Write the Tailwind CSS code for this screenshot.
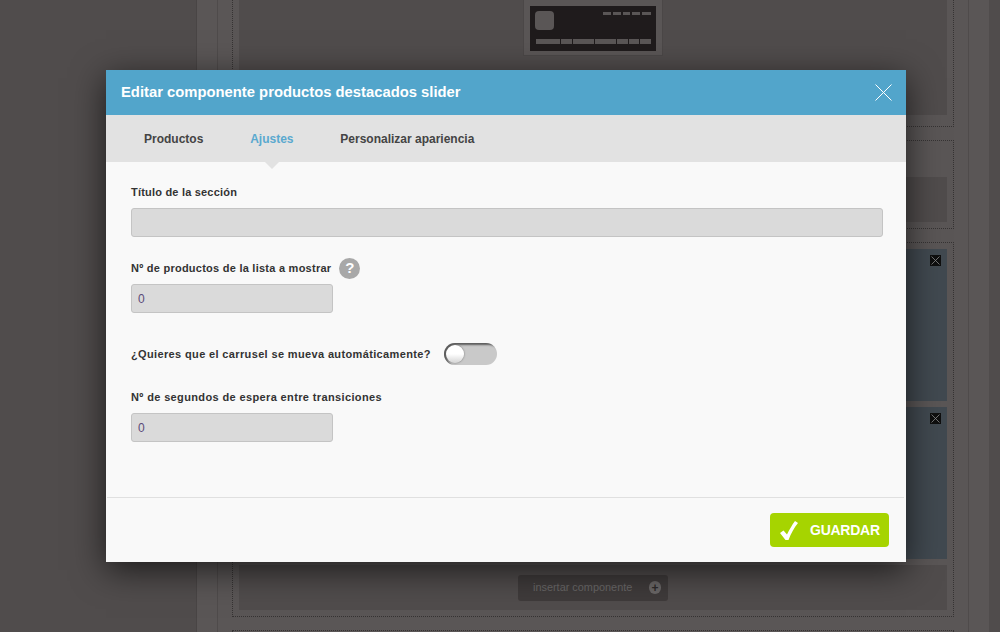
<!DOCTYPE html>
<html lang="es">
<head>
<meta charset="utf-8">
<script src="https://cdn.jsdelivr.net/npm/@tailwindcss/browser@4"></script>
</head>
<body class="relative w-[1000px] h-[632px] overflow-hidden bg-[#504c4c] font-['Liberation_Sans',Arial,sans-serif]">
  <!-- dimmed page behind -->
  <div class="ml-[196px] w-[793px] h-[632px] bg-[#5a5656] border-l border-[#494545] pl-[20px] pr-[20px]">
    <div class="h-full border-x border-[#4f4b4b] px-[14px] flex flex-col gap-[13px] overflow-hidden">
      <section class="h-[127px] shrink-0 border-x border-b border-dotted border-[#363333] px-[6px] pb-[11px]">
        <div class="h-full bg-[#504c4c] flex justify-center">
          <div class="w-[140px] h-[56px] bg-[#5a5656] border-b border-x border-[#4b4747] px-[6px] pb-[5px]">
            <svg class="mt-[6px] block" width="126" height="45" viewBox="0 0 126 45">
              <rect width="126" height="45" fill="#1f1b1c"/>
              <rect x="5" y="5" width="19" height="19" rx="4" fill="#5a5656"/>
              <g fill="#5a5656">
                <rect x="73" y="6" width="8" height="3"/><rect x="83" y="6" width="8" height="3"/><rect x="93" y="6" width="7" height="3"/><rect x="102" y="6" width="8" height="3"/><rect x="112" y="6" width="9" height="3"/>
                <rect x="6" y="33" width="24" height="5"/><rect x="31" y="33" width="11" height="5"/><rect x="43" y="33" width="21" height="5"/><rect x="65" y="33" width="21" height="5"/><rect x="87" y="33" width="11" height="5"/><rect x="99" y="33" width="10" height="5"/><rect x="110" y="33" width="11" height="5"/>
              </g>
            </svg>
          </div>
        </div>
      </section>
      <section class="h-[89px] shrink-0 border border-dotted border-[#363333] px-[6px] pt-[36px]">
        <div class="h-[45px] bg-[#504c4c]"></div>
      </section>
      <section class="h-[375px] shrink-0 border border-dotted border-[#363333] px-[6px] pt-[6px] flex flex-col gap-[6px]">
        <div class="relative h-[152px] shrink-0 bg-[#414950]">
          <div class="absolute top-[6px] right-[6px] w-[11px] h-[11px] bg-[#0f0f0f] flex items-center justify-center">
            <svg width="9" height="9" viewBox="0 0 9 9" stroke="#8a8a8a" stroke-width="0.8"><path d="M0.5 0.5L8.5 8.5M8.5 0.5L0.5 8.5"/></svg>
          </div>
        </div>
        <div class="relative h-[152px] shrink-0 bg-[#414950]">
          <div class="absolute top-[6px] right-[6px] w-[11px] h-[11px] bg-[#0f0f0f] flex items-center justify-center">
            <svg width="9" height="9" viewBox="0 0 9 9" stroke="#8a8a8a" stroke-width="0.8"><path d="M0.5 0.5L8.5 8.5M8.5 0.5L0.5 8.5"/></svg>
          </div>
        </div>
        <div class="h-[45px] shrink-0 bg-[#504c4c] flex items-center justify-center">
          <div class="w-[150px] h-[26px] rounded-[3px] bg-[#3f3b3b] flex items-center justify-between pl-[15px] pr-[7px] text-[10.9px] text-[#696767]">
            <span>insertar componente</span>
            <span class="w-[12px] h-[13px] rounded-full bg-[#6a6767] flex items-center justify-center text-[#2d2a2a] text-[12px] font-bold leading-none">+</span>
          </div>
        </div>
      </section>
      <section class="h-[20px] shrink-0 border-x border-t border-dotted border-[#363333]"></section>
    </div>
  </div>

  <!-- modal -->
  <div class="absolute left-[106px] top-[70px] w-[800px] h-[492px] bg-[#f9f9f9] shadow-[0_8px_32px_rgba(0,0,0,0.65)] flex flex-col">
    <header class="h-[45px] shrink-0 bg-[#52a5cb] flex items-center justify-between pl-[15px] pr-[14px]">
      <h1 class="text-[14.8px] font-bold text-white">Editar componente productos destacados slider</h1>
      <svg width="17" height="17" viewBox="0 0 17 17" stroke="#ffffff" stroke-width="1"><path d="M0.5 0.5L16.5 16.5M16.5 0.5L0.5 16.5"/></svg>
    </header>
    <nav class="relative h-[47px] shrink-0 bg-[#e2e2e2] flex items-center gap-[46.8px] pl-[38px] text-[12px] font-bold text-[#444444]">
      <span>Productos</span>
      <span class="relative text-[#5aa9cf]">Ajustes
        <span class="absolute left-1/2 -translate-x-1/2 top-[31px] w-0 h-0 border-x-[8px] border-x-transparent border-t-[8px] border-t-[#e2e2e2]"></span>
      </span>
      <span>Personalizar apariencia</span>
    </nav>
    <main class="flex-1 pl-[25px] text-[11px] font-bold text-[#333333]">
      <label class="block mt-[22px] h-[16px] leading-[16px] tracking-[0.2px]">Título de la sección</label>
      <input class="block mt-[8px] w-[752px] h-[29px] rounded-[3px] border border-[#c4c4c4] bg-[#dadada]" type="text">

      <div class="mt-[23px] h-[16px] flex items-center gap-[8px]">
        <label class="leading-[16px] tracking-[0.25px]">Nº de productos de la lista a mostrar</label>
        <span class="w-[21px] h-[21px] rounded-full bg-[#a8a8a8] flex items-center justify-center text-white text-[15px] font-bold">?</span>
      </div>
      <input class="block mt-[8px] w-[202px] h-[29px] rounded-[3px] border border-[#c4c4c4] bg-[#dadada] px-[6px] text-[12px] font-normal text-[#5a4a78]" type="text" value="0">

      <div class="mt-[30px] h-[22px] flex items-center gap-[13px]">
        <label class="leading-[16px] tracking-[0.36px]">¿Quieres que el carrusel se mueva automáticamente?</label>
        <span class="relative w-[53px] h-[22px] rounded-full bg-[#c9c9c9] shadow-[inset_3px_2px_2px_#5c5c5c]">
          <span class="absolute left-[2px] top-[2px] w-[18px] h-[18px] rounded-full bg-gradient-to-b from-[#ffffff] via-[#ffffff] to-[#d4d4d4] shadow-[0_0_2px_#666666]"></span>
        </span>
      </div>

      <label class="block mt-[24px] h-[16px] leading-[16px] tracking-[0.37px]">Nº de segundos de espera entre transiciones</label>
      <input class="block mt-[8px] w-[202px] h-[29px] rounded-[3px] border border-[#c4c4c4] bg-[#dadada] px-[6px] text-[12px] font-normal text-[#5a4a78]" type="text" value="0">
    </main>
    <footer class="h-[65px] shrink-0 ml-[1px] mr-[2px] border-t border-[#e0e0e0] flex justify-end pt-[15px] pr-[15px]">
      <button class="w-[119px] h-[34px] rounded-[4px] bg-[#a6d400] flex items-center pl-[10px] gap-[12px] text-white text-[14px] tracking-[-0.25px] font-bold">
        <svg width="18" height="19" viewBox="0 0 18 19" fill="#ffffff"><path d="M0 12L3.5 9.5L7 13.5C9.5 8.5 12 4 15 0L18 2C14 7 11 12.5 8.5 19L5.5 19Z"/></svg>
        <span>GUARDAR</span>
      </button>
    </footer>
  </div>
</body>
</html>
